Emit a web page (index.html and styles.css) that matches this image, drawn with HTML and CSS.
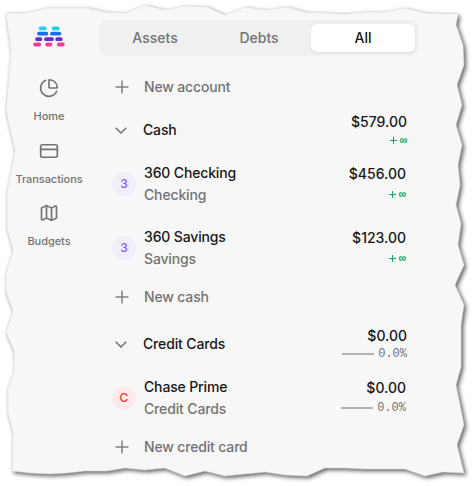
FILE: index.html
```html
<!DOCTYPE html>
<html lang="en">
<head>
<meta charset="utf-8">
<title>Accounts</title>
<link rel="stylesheet" href="styles.css">
</head>
<body>
<svg class="paper" viewBox="0 0 474 486" aria-hidden="true"><path d="M6 13H27L46 8H88L105 12L125 13L145 5L165 10L185 6L207 7L225 15L245 7L265 10L287 7L305 12L345 14L365 12H385L405 8L425 13L458 14L456 25L463 45L464 65L457 85L462 105L456 125L462 145L458 165L460 185L456 205L461 224L458 245L464 265L455 285L464 305L461 325V367L456 385L464 425L457 445L464 473L443 472L425 476L405 469H365L345 468H325L307 476L285 475L265 472L225 476L205 471L185 476L165 468L145 470L125 468L107 471H85L67 473L50 474L31 473L12 471L13 433L8 413V388L14 371V351L6 332L13 311L6 292V273L13 250L7 228V192L15 151L9 125L6 110L11 52Z"/></svg>
<div class="app">
  <nav class="sidebar">
    <svg class="logo" viewBox="0 0 32 21" aria-label="Logo" stroke-width="3.8" stroke-linecap="round">
      <path stroke="#22ccee" d="M7.7 2.4h4M20.7 2.4h4"/>
      <path stroke="#1570ef" d="M6 7.7h7.3M19 7.7h7.3"/>
      <path stroke="#6927da" d="M4 13.2h3.5M13 13.2h6M24.2 13.2h3.5"/>
      <path stroke="#f23e94" d="M2.2 18.5h4M14.2 18.5h3.2M25.8 18.5h4"/>
    </svg>
    <a class="nav-item"><svg class="nav-icon" viewBox="0 0 24 24"><path d="M21 12c.552 0 1.005-.449.95-.998a10 10 0 0 0-8.953-8.951c-.55-.055-.998.398-.998.95v8a1 1 0 0 0 1 1z"/><path d="M21.21 15.89A10 10 0 1 1 8 2.83"/></svg><span>Home</span></a>
    <a class="nav-item"><svg class="nav-icon" viewBox="0 0 24 24"><rect x="2" y="4.5" width="20" height="15" rx="2"/><path d="M2 10h20"/></svg><span>Transactions</span></a>
    <a class="nav-item"><svg class="nav-icon" viewBox="0 0 24 24"><path d="M14.1 5.55a2 2 0 0 0 1.8 0l3.65-1.83A1 1 0 0 1 21 4.62v12.76a1 1 0 0 1-.55.9l-4.55 2.27a2 2 0 0 1-1.8 0l-4.2-2.1a2 2 0 0 0-1.8 0l-3.65 1.83A1 1 0 0 1 3 19.38V6.62a1 1 0 0 1 .55-.9L8.1 3.45a2 2 0 0 1 1.8 0zM15 5.76v15M9 3.24v15"/></svg><span>Budgets</span></a>
  </nav>
  <main class="accounts">
    <div class="tabs"><span class="tab">Assets</span><span class="tab">Debts</span><span class="tab active">All</span></div>
    <div class="new-row first"><svg class="plus" viewBox="0 0 14 14"><path d="M7 .5v13M.5 7h13"/></svg><span>New account</span></div>
    <section class="group">
      <div class="group-head"><svg class="chevron" viewBox="0 0 12 7"><path d="M.7.7 6 6 11.3.7"/></svg><span class="name">Cash</span><div class="value"><b>$579.00</b><span class="gain"><svg class="gain-plus" viewBox="0 0 7 7"><path d="M3.5 0v7M0 3.5h7"/></svg><i>∞</i></span></div></div>
      <div class="account"><span class="avatar purple">3</span><div class="name">360 Checking<small>Checking</small></div><div class="value"><b>$456.00</b><span class="gain"><svg class="gain-plus" viewBox="0 0 7 7"><path d="M3.5 0v7M0 3.5h7"/></svg><i>∞</i></span></div></div>
      <div class="account"><span class="avatar purple">3</span><div class="name">360 Savings<small>Savings</small></div><div class="value"><b>$123.00</b><span class="gain"><svg class="gain-plus" viewBox="0 0 7 7"><path d="M3.5 0v7M0 3.5h7"/></svg><i>∞</i></span></div></div>
      <div class="new-row"><svg class="plus" viewBox="0 0 14 14"><path d="M7 .5v13M.5 7h13"/></svg><span>New cash</span></div>
    </section>
    <section class="group credit">
      <div class="group-head"><svg class="chevron" viewBox="0 0 12 7"><path d="M.7.7 6 6 11.3.7"/></svg><span class="name">Credit Cards</span><div class="value"><b>$0.00</b><span class="flat">0.0%</span></div></div>
      <div class="account"><span class="avatar red">C</span><div class="name">Chase Prime<small>Credit Cards</small></div><div class="value"><b>$0.00</b><span class="flat">0.0%</span></div></div>
      <div class="new-row"><svg class="plus" viewBox="0 0 14 14"><path d="M7 .5v13M.5 7h13"/></svg><span>New credit card</span></div>
    </section>
  </main>
</div>
</body>
</html>
```
FILE: styles.css
```css
* { box-sizing: border-box; }
body { margin: 0; width: 474px; height: 486px; overflow: hidden; background: #fff; font: 500 14px/20px Inter, "Liberation Sans", sans-serif; color: #171717; }
svg { display: block; fill: none; flex: none; }
.paper { position: absolute; inset: 0; width: 474px; height: 486px; filter: drop-shadow(2px 2px 2px rgba(0,0,0,.62)); }
.paper path { fill: #f7f7f7; stroke: #dedede; stroke-width: .6; }
.app { position: relative; display: flex; }
.sidebar { width: 99px; padding: 26px 1px 0 0; display: flex; flex-direction: column; align-items: center; }
.logo { width: 32px; height: 21px; margin-bottom: 31px; }
.nav-item { height: 62.5px; display: flex; flex-direction: column; align-items: center; gap: 11px; font-size: 11px; line-height: 14px; letter-spacing: -.06px; color: #737373; }
.nav-icon { width: 20px; height: 20px; stroke: #737373; stroke-width: 2; stroke-linejoin: round; stroke-linecap: round; }
.accounts { width: 319px; padding-top: 20px; }
.tabs { height: 36px; padding: 4px 3px 4px 4px; display: flex; border-radius: 8px; background: #f0f0f0; color: #737373; }
.tab { flex: 1; display: flex; align-items: center; justify-content: center; border-radius: 6px; }
.active { background: #fff; color: #171717; box-shadow: 0 1px 3px rgba(0,0,0,.08); }
.new-row { height: 36px; padding-left: 16px; display: flex; align-items: center; gap: 15px; letter-spacing: -.16px; color: #737373; }
.first { margin: 9px 0 0; height: 44px; }
.plus { width: 14px; height: 14px; stroke: #808080; stroke-width: 1.5; }
.group-head { height: 42px; padding: 0 11px 0 16px; display: flex; align-items: center; }
.chevron { width: 12px; height: 7px; margin-right: 16px; stroke: #737373; stroke-width: 1.5; }
.name { letter-spacing: -.15px; }
.account { height: 64px; padding: 0 12px 0 13px; display: flex; align-items: center; }
.account .name { line-height: 22px; padding-top: 1px; }
.name small { display: block; font-size: 14px; color: #737373; }
.avatar { width: 24px; height: 24px; margin: 1px 8px 0 0; border-radius: 50%; display: flex; align-items: center; justify-content: center; font-size: 12px; }
.purple { color: #875bf7; background: #f1edff; }
.red { color: #f13636; background: #feeaea; }
.value { margin-left: auto; display: flex; flex-direction: column; align-items: flex-end; }
.value b { font-weight: 500; line-height: 20px; }
.account .value { gap: 2px; }
.gain { height: 16px; display: flex; align-items: center; gap: 3px; color: #10a861; }
.gain-plus { width: 7px; height: 7px; stroke: #10a861; stroke-width: 1; }
.gain i { padding-top: 2px; font: 700 12px/14px "Liberation Mono", monospace; }
.flat { display: flex; align-items: center; gap: 4px; font: 12px/16px "Liberation Mono", monospace; color: #737373; }
.flat::before { content: ""; width: 32px; height: 2px; background: #b3b3b3; }
.credit { padding-top: 8px; }
```
